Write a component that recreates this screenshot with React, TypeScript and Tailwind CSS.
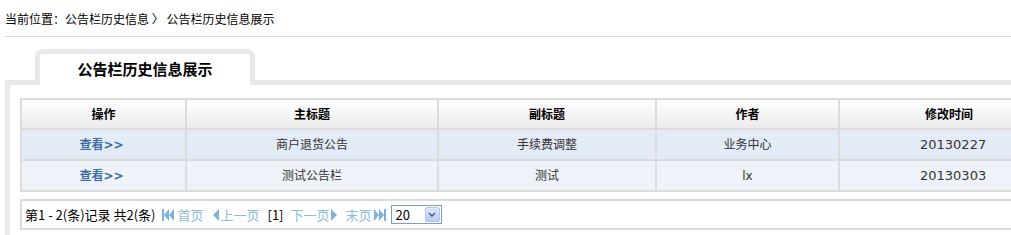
import React from "react";

const FirstIcon = () => (
  <svg width="13" height="12" viewBox="0 0 13 12" className="inline-block">
    <rect x="0" y="0" width="2" height="12" fill="#7fb2d6" />
    <polygon points="7,0 7,12 2,6" fill="#7fb2d6" />
    <polygon points="12,0 12,12 7,6" fill="#7fb2d6" />
  </svg>
);
const LastIcon = () => (
  <svg width="13" height="12" viewBox="0 0 13 12" className="inline-block">
    <polygon points="1,0 1,12 6,6" fill="#7fb2d6" />
    <polygon points="6,0 6,12 11,6" fill="#7fb2d6" />
    <rect x="11" y="0" width="2" height="12" fill="#7fb2d6" />
  </svg>
);
const PrevIcon = () => (
  <svg width="6" height="12" viewBox="0 0 6 12" className="inline-block">
    <polygon points="6,0 6,12 0,6" fill="#7fb2d6" />
  </svg>
);
const NextIcon = () => (
  <svg width="6" height="12" viewBox="0 0 6 12" className="inline-block">
    <polygon points="0,0 0,12 6,6" fill="#7fb2d6" />
  </svg>
);

const rows = [
  { title: "商户退货公告", sub: "手续费调整", author: "业务中心", time: "20130227", bg: "bg-[#e3ebf6]" },
  { title: "测试公告栏", sub: "测试", author: "lx", time: "20130303", bg: "bg-[#eff3f9]" },
];

export default function App() {
  const font = { fontFamily: '"DejaVu Sans", "Noto Sans CJK SC", sans-serif' };
  const cjk = { fontFamily: '"Noto Sans CJK SC", sans-serif' };
  return (
    <div className="w-[1011px] h-[235px] overflow-hidden bg-white text-[12px] text-black" style={font}>
      <div className="ml-[5px] h-[37px] border-b border-[#dddddd] flex items-center pt-[1px]">
        <span style={cjk}>当前位置：公告栏历史信息 〉 公告栏历史信息展示</span>
      </div>
      <div className="ml-[5px] mt-[12px]">
        <div className="relative z-10 ml-[30px] w-[220px] h-[36px] -mb-[5px] border-[5px] border-b-0 border-[#e9e9e9] rounded-t-[7px] bg-white flex items-center justify-center">
          <span className="font-bold text-[15px]" style={cjk}>公告栏历史信息展示</span>
        </div>
        <div className="border-t-[5px] border-l-[5px] border-[#e9e9e9] pl-[10px] pt-[13px] pb-[10px]">
          <table className="border-collapse w-[1200px] table-fixed border-2 border-[#dcdcdc]">
            <colgroup>
              <col className="w-[165px]" />
              <col className="w-[252px]" />
              <col className="w-[218px]" />
              <col className="w-[183px]" />
              <col />
            </colgroup>
            <thead>
              <tr className="h-[30px] bg-gradient-to-b from-[#ffffff] to-[#ebebeb]">
                {["操作", "主标题", "副标题", "作者", "修改时间"].map((h, i) => (
                  <th key={h} className={`border-2 border-[#dcdcdc] font-bold text-[12px] ${i === 4 ? "text-left pl-[85px]" : "text-center"}`} style={cjk}>
                    {h}
                  </th>
                ))}
              </tr>
            </thead>
            <tbody>
              {rows.map((r) => (
                <tr key={r.time} className={`h-[31px] ${r.bg} text-[#333333]`}>
                  <td className="border-2 border-[#dcdcdc] text-center font-bold text-[#3b6ea5] pr-[4px]">查看&gt;&gt;</td>
                  <td className="border-2 border-[#dcdcdc] text-center">{r.title}</td>
                  <td className="border-2 border-[#dcdcdc] text-center">{r.sub}</td>
                  <td className="border-2 border-[#dcdcdc] text-center">{r.author}</td>
                  <td className="border-2 border-[#dcdcdc] text-left pl-[80px] text-[13px]">{r.time}</td>
                </tr>
              ))}
            </tbody>
          </table>
          <div className="mt-[7px] w-[1200px] h-[31px] border-2 border-[#dcdcdc] flex items-center pl-[3px] text-[13px]" style={{ fontFamily: '"Noto Sans CJK SC", "DejaVu Sans", sans-serif' }}>
            <span>第1 - 2(条)记录 共2(条)</span>
            <span className="flex items-center text-[#8cbcdc] ml-[7px] gap-[2px]"><FirstIcon />首页</span>
            <span className="flex items-center text-[#8cbcdc] ml-[10px] gap-[1px]"><PrevIcon />上一页</span>
            <span className="ml-[8px]">[1]</span>
            <span className="flex items-center text-[#8cbcdc] ml-[7px] gap-[1px]">下一页<NextIcon /></span>
            <span className="flex items-center text-[#8cbcdc] ml-[9px] gap-[1px]">末页<LastIcon /></span>
            <div className="ml-[5px] w-[51px] h-[19px] border border-[#7f9db9] flex items-center justify-between pl-[4px] pr-[1px] bg-white">
              <span className="text-[13px] text-black">20</span>
              <span className="w-[15px] h-[15px] rounded-[2px] bg-gradient-to-b from-[#dbe6fb] to-[#b7cbf5] border border-[#b2c6ee] flex items-center justify-center">
                <svg width="8" height="5" viewBox="0 0 8 5"><polyline points="1,1 4,4 7,1" fill="none" stroke="#4d6185" strokeWidth="1.6" /></svg>
              </span>
            </div>
          </div>
        </div>
      </div>
    </div>
  );
}
